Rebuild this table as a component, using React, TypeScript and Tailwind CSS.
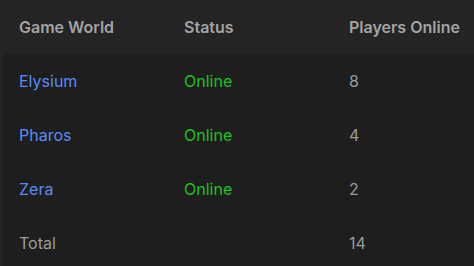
const worlds = [
  { name: "Elysium", status: "Online", players: 8 },
  { name: "Pharos", status: "Online", players: 4 },
  { name: "Zera", status: "Online", players: 2 },
];

export default function App() {
  const total = worlds.reduce((sum, w) => sum + w.players, 0);

  return (
    <div
      className="h-[266px] w-[474px] overflow-hidden bg-[#1e1e1e] border-l-[3px] border-[#252525] text-base whitespace-nowrap"
      style={{ fontFamily: "Inter, 'Noto Sans', sans-serif" }}
    >
      {/* Header */}
      <div className="grid grid-cols-[165px_165px_1fr] h-[54px] items-center bg-[#242424] px-4 font-semibold text-[#a3a3a3]">
        <span>Game World</span>
        <span>Status</span>
        <span>Players Online</span>
      </div>

      {worlds.map((w) => (
        <div
          key={w.name}
          className="grid grid-cols-[165px_165px_1fr] h-[54px] items-center px-4"
        >
          <span className="text-[#5b8cf5]">{w.name}</span>
          <span className="text-[#1fc21f]">{w.status}</span>
          <span className="text-[#9b9b9b]">{w.players}</span>
        </div>
      ))}

      {/* Total */}
      <div className="grid grid-cols-[165px_165px_1fr] h-[54px] items-center px-4 text-[#9b9b9b]">
        <span>Total</span>
        <span />
        <span>{total}</span>
      </div>
    </div>
  );
}
